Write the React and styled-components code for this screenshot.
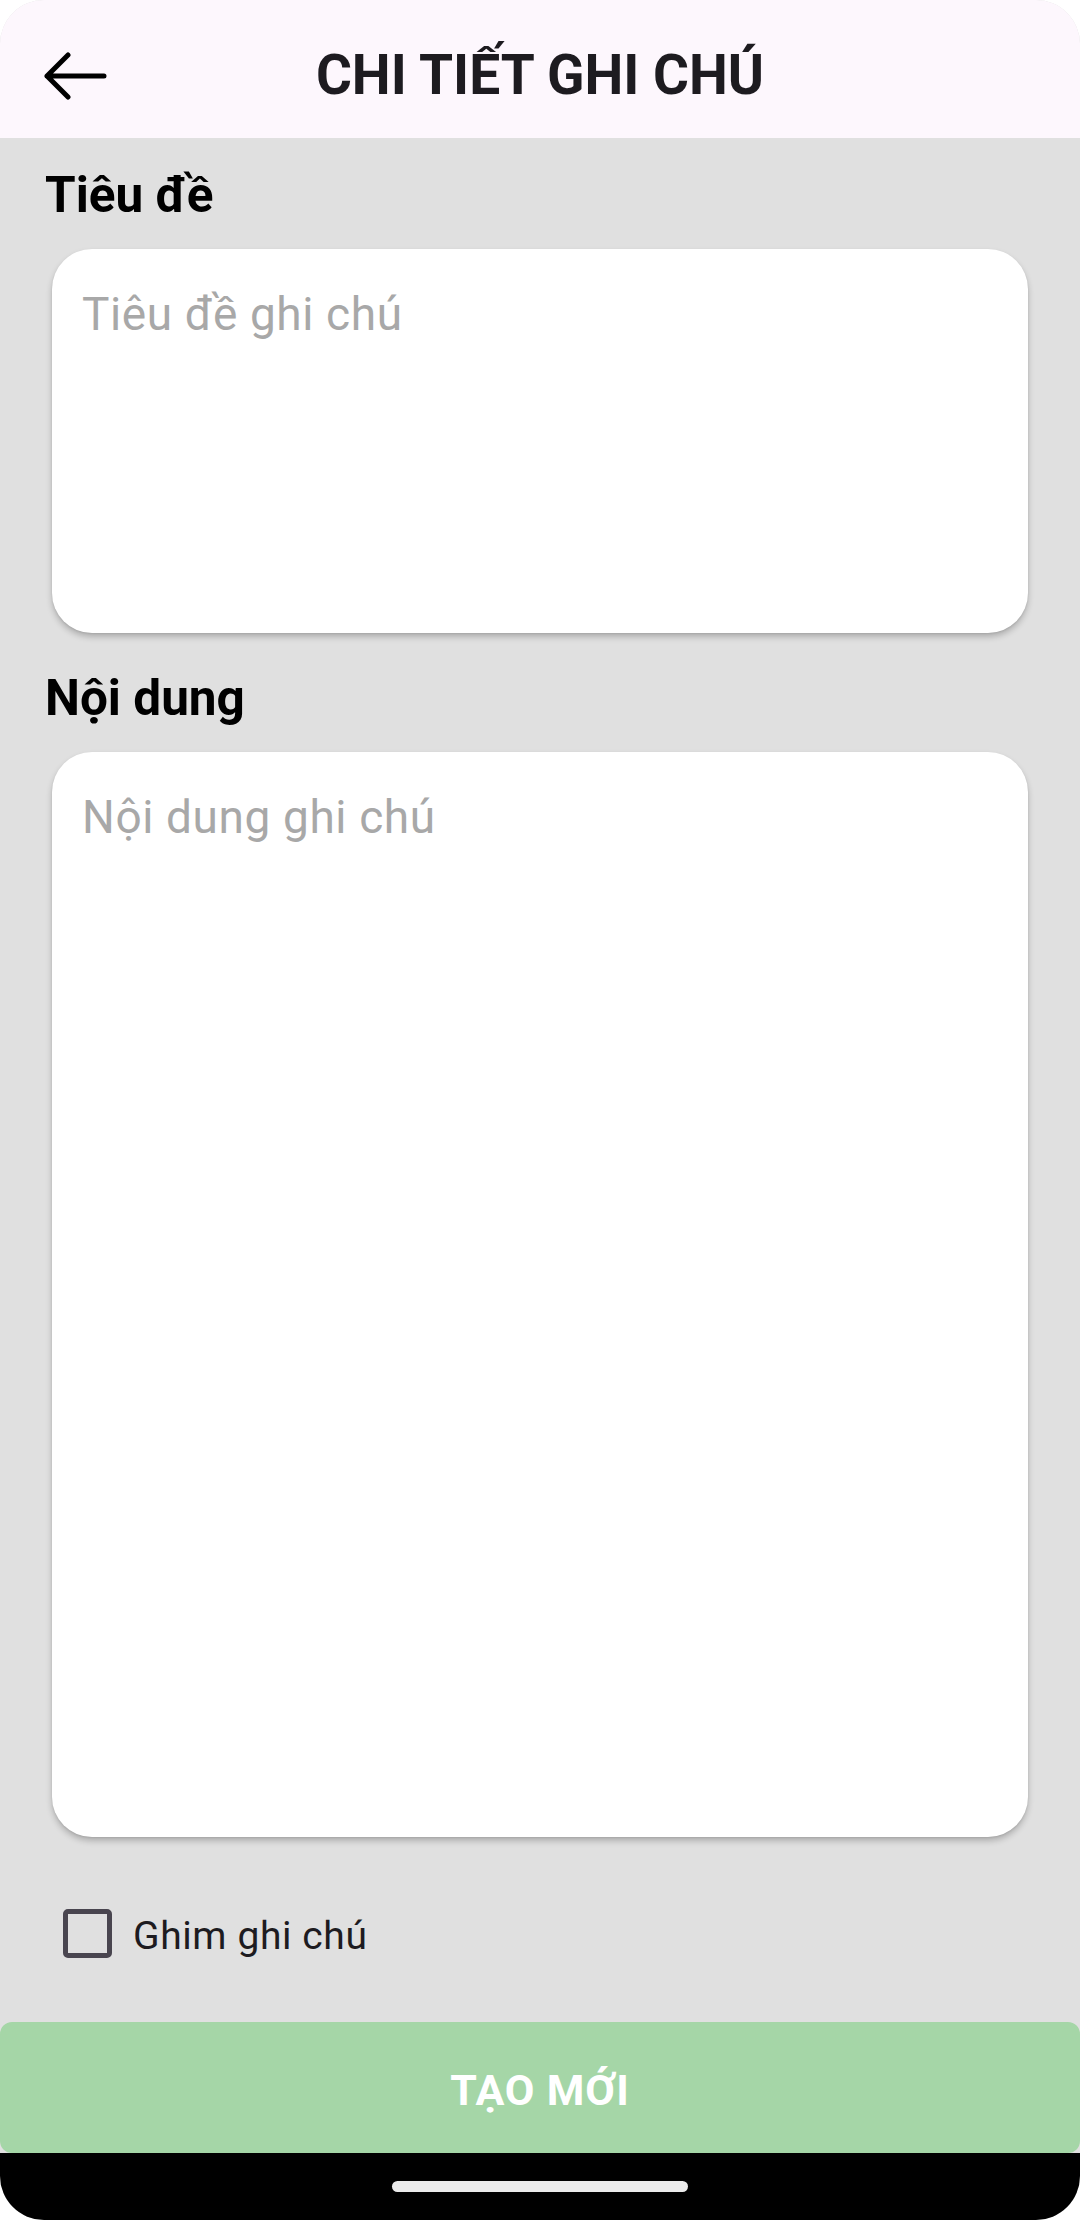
import React from "react";
import styled, { createGlobalStyle } from "styled-components";

const GlobalStyle = createGlobalStyle`
  html, body {
    margin: 0;
    padding: 0;
    background: #ffffff;
  }
  body {
    font-family: Roboto, "Noto Sans", "Liberation Sans", sans-serif;
  }
  * { box-sizing: border-box; }
`;

const Screen = styled.div`
  width: 1080px;
  height: 2220px;
  display: flex;
  flex-direction: column;
  background: #e0e0e0;
  border-radius: 44px;
  overflow: hidden;
`;

const Header = styled.header`
  height: 138px;
  flex: 0 0 138px;
  background: #fdf7fd;
  display: grid;
  grid-template-columns: 1fr auto 1fr;
  align-items: center;
  padding-top: 12px;
`;

const BackButton = styled.button`
  justify-self: start;
  margin-left: 43px;
  margin-top: 2px;
  padding: 0;
  border: 0;
  background: transparent;
  display: flex;
  cursor: pointer;
`;

const Title = styled.h1`
  margin: 0;
  font-family: Roboto, "Noto Sans", sans-serif;
  font-weight: 700;
  font-size: 55px;
  line-height: normal;
  color: #1d1b20;
  white-space: nowrap;
`;

const Content = styled.main`
  flex: 1 1 auto;
  display: flex;
  flex-direction: column;
  padding: 26px 52px 0 45px;
`;

const Label = styled.div`
  font-family: Roboto, sans-serif;
  font-weight: 700;
  font-size: 49.5px;
  line-height: 62px;
  color: #000000;
  margin-top: ${(p) => (p.$first ? "0" : "34px")};
  margin-bottom: 23px;
`;

const FieldBox = styled.div`
  margin-left: 7px;
  height: ${(p) => p.$height}px;
  flex: 0 0 ${(p) => p.$height}px;
  background: #ffffff;
  border-radius: 40px;
  box-shadow: 0 4px 6px rgba(0, 0, 0, 0.22), 0 1px 2px rgba(0, 0, 0, 0.08);
  padding: 38px 30px 0 30px;
`;

const Placeholder = styled.div`
  font-family: Roboto, sans-serif;
  font-weight: 400;
  font-size: 46px;
  letter-spacing: 0.6px;
  line-height: 54px;
  color: #a8a8a8;
`;

const CheckRow = styled.label`
  display: flex;
  align-items: center;
  margin-top: 72px;
  margin-left: 18px;
  height: 49px;
  gap: 21px;
`;

const CheckBox = styled.span`
  width: 49px;
  height: 49px;
  flex: 0 0 49px;
  border: 5px solid #49454f;
  border-radius: 5px;
`;

const CheckText = styled.span`
  font-family: Roboto, sans-serif;
  font-size: 39px;
  letter-spacing: 0.6px;
  line-height: normal;
  color: #1d1b20;
  margin-top: 5px;
`;

const CreateButton = styled.button`
  flex: 0 0 131px;
  height: 131px;
  width: 100%;
  border: 0;
  border-radius: 12px;
  background: #a5d6a7;
  color: #ffffff;
  font-family: Roboto, sans-serif;
  font-weight: 700;
  font-size: 43px;
  letter-spacing: 0.8px;
  line-height: normal;
  padding: 4px 0 0 0;
  display: flex;
  align-items: center;
  justify-content: center;
`;

const NavBar = styled.div`
  flex: 0 0 67px;
  height: 67px;
  background: #000000;
  display: flex;
  justify-content: center;
  align-items: flex-start;
  padding-top: 28px;
`;

const Handle = styled.div`
  width: 296px;
  height: 11px;
  border-radius: 6px;
  background: #ebebeb;
`;

function BackArrow() {
  return (
    <svg width="64" height="48" viewBox="0 0 64 48" fill="none">
      <path
        d="M61 24H4M25 3L4 24L25 45"
        stroke="#000000"
        strokeWidth="5"
        strokeLinecap="round"
        strokeLinejoin="round"
      />
    </svg>
  );
}

export default function App() {
  return (
    <>
      <GlobalStyle />
      <Screen>
        <Header>
          <BackButton aria-label="Quay lại">
            <BackArrow />
          </BackButton>
          <Title>CHI TIẾT GHI CHÚ</Title>
          <span />
        </Header>
        <Content>
          <Label $first>Tiêu đề</Label>
          <FieldBox $height={384}>
            <Placeholder>Tiêu đề ghi chú</Placeholder>
          </FieldBox>
          <Label>Nội dung</Label>
          <FieldBox $height={1085}>
            <Placeholder>Nội dung ghi chú</Placeholder>
          </FieldBox>
          <CheckRow>
            <CheckBox />
            <CheckText>Ghim ghi chú</CheckText>
          </CheckRow>
        </Content>
        <CreateButton>TẠO MỚI</CreateButton>
        <NavBar>
          <Handle />
        </NavBar>
      </Screen>
    </>
  );
}
